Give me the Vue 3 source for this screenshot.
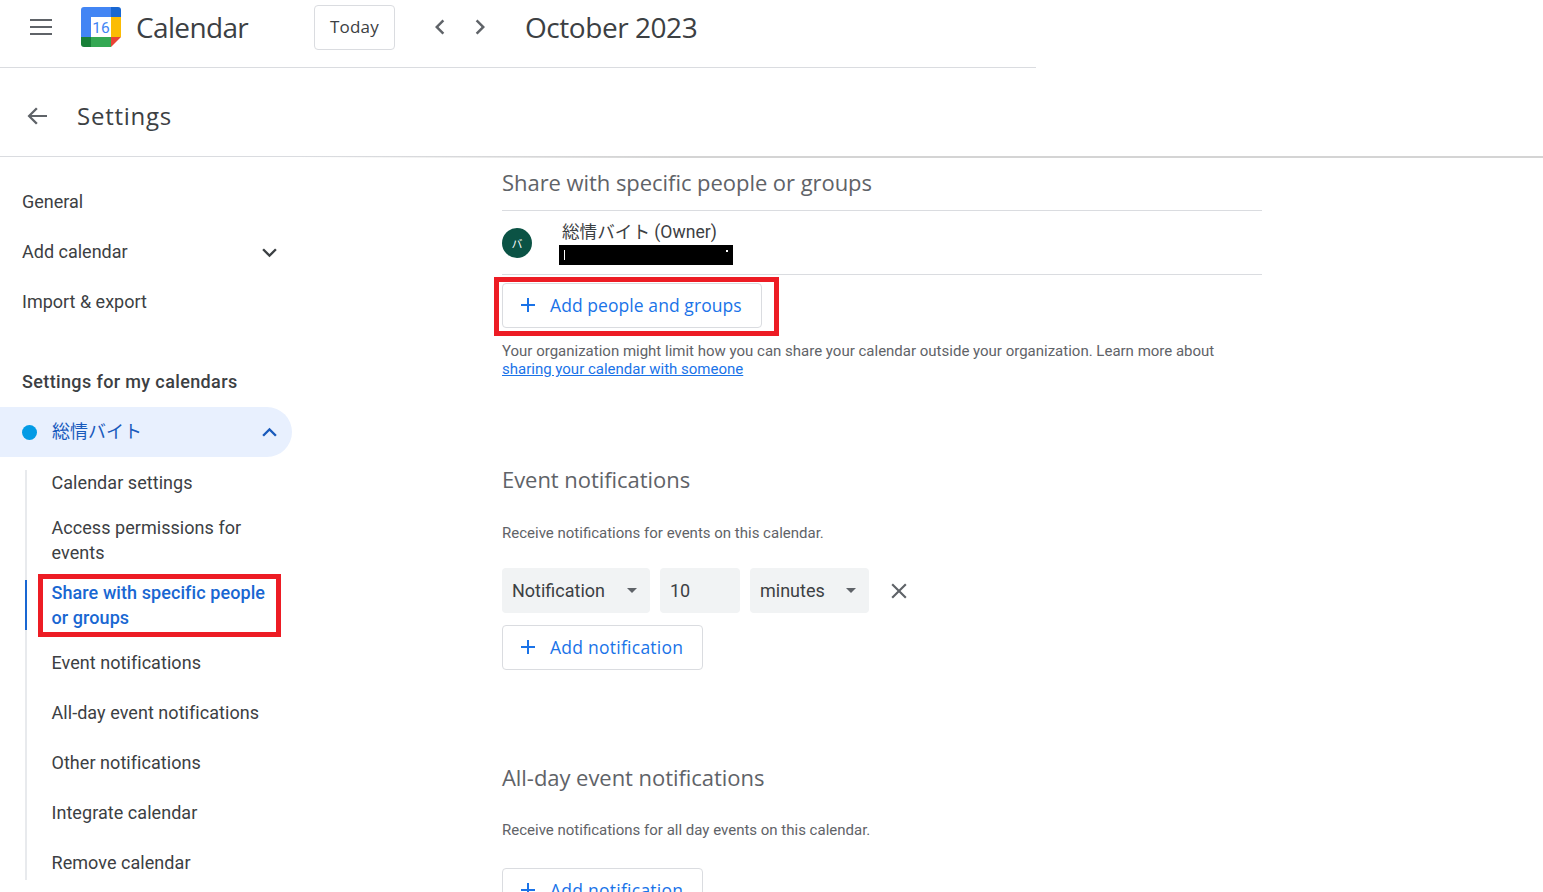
<script setup>
const topItems = [
  { label: 'General' },
  { label: 'Add calendar', chevron: true },
  { label: 'Import & export' }
]
const subItems = [
  { label: 'Calendar settings' },
  { label: 'Access permissions for events', tall: true },
  { label: 'Share with specific people or groups', tall: true, active: true },
  { label: 'Event notifications' },
  { label: 'All-day event notifications' },
  { label: 'Other notifications' },
  { label: 'Integrate calendar' },
  { label: 'Remove calendar' }
]
</script>

<template>
  <div class="page">
    <header class="topbar">
      <svg class="menu" width="24" height="24" viewBox="0 0 24 24"><path d="M1 4h22v2H1zM1 11h22v2H1zM1 18h22v2H1z" fill="#5f6368"/></svg>
      <svg class="logo" width="40" height="40" viewBox="0 0 40 40">
        <path d="M3 0h27v10H10v20H0V3a3 3 0 0 1 3-3z" fill="#4285f4"/>
        <path d="M30 0h7a3 3 0 0 1 3 3v7H30z" fill="#1967d2"/>
        <rect x="30" y="10" width="10" height="20" fill="#fbbc04"/>
        <rect x="10" y="30" width="20" height="10" fill="#34a853"/>
        <path d="M0 30h10v10H3a3 3 0 0 1-3-3z" fill="#188038"/>
        <path d="M30 30h10L30 40z" fill="#ea4335"/>
        <rect x="10" y="10" width="20" height="20" fill="#fff"/>
        <text x="20" y="26" text-anchor="middle" class="logo-num">16</text>
      </svg>
      <span class="brand">Calendar</span>
      <button class="today">Today</button>
      <svg class="nav-prev" width="30" height="30" viewBox="0 0 24 24"><path d="M15.400 7.400 14 6l-6 6 6 6 1.400-1.400L10.800 12z" fill="#5f6368"/></svg>
      <svg class="nav-next" width="30" height="30" viewBox="0 0 24 24"><path d="M8.600 7.400 10 6l6 6-6 6-1.400-1.400L13.200 12z" fill="#5f6368"/></svg>
      <span class="month">October 2023</span>
    </header>

    <div class="settings-bar">
      <svg class="back" width="24" height="24" viewBox="0 0 24 24"><path d="M22 11H6.600l6.100-6.100L11 3.500 2.500 12l8.500 8.500 1.700-1.400L6.600 13H22z" fill="#5f6368"/></svg>
      <h1>Settings</h1>
    </div>

    <div class="body">
      <nav class="sidebar">
        <div v-for="item in topItems" :key="item.label" class="top-item">
          <span class="top-label">{{ item.label }}</span>
          <svg v-if="item.chevron" width="29" height="29" viewBox="0 0 24 24"><path d="M7.400 8.600 12 13.200l4.600-4.600L18 10l-6 6-6-6z" fill="#3c4043"/></svg>
        </div>
        <div class="group-title">Settings for my calendars</div>
        <div class="calendar-item">
          <span class="dot"></span>
          <span class="cal-name">総情バイト</span>
          <svg width="29" height="29" viewBox="0 0 24 24"><path d="M7.400 15.400 12 10.800l4.600 4.600L18 14l-6-6-6 6z" fill="#185abc"/></svg>
        </div>
        <div class="sub-list">
          <div
            v-for="item in subItems"
            :key="item.label"
            class="sub-item"
            :class="{ tall: item.tall, active: item.active }"
          >{{ item.label }}</div>
        </div>
      </nav>

      <main class="content">
        <section class="share">
          <h2>Share with specific people or groups</h2>
          <div class="owner-row">
            <span class="avatar">バ</span>
            <div class="owner-text">
              <div class="owner-name">総情バイト (Owner)</div>
              <div class="redacted"><i class="mark-a"></i><i class="mark-b"></i></div>
            </div>
          </div>
          <button class="add-btn people">
            <svg width="24" height="24" viewBox="0 0 24 24"><path d="M19 13h-6v6h-2v-6H5v-2h6V5h2v6h6z" fill="#1a73e8"/></svg>
            <span class="btn-label">Add people and groups</span>
          </button>
          <p class="helper">Your organization might limit how you can share your calendar outside your organization. Learn more about <a href="#">sharing your calendar with someone</a></p>
        </section>

        <section class="events">
          <h2>Event notifications</h2>
          <p class="desc">Receive notifications for events on this calendar.</p>
          <div class="notify-row">
            <div class="field f-type">Notification<span class="caret"></span></div>
            <div class="field f-num">10</div>
            <div class="field f-unit">minutes<span class="caret"></span></div>
            <svg class="close" width="26" height="26" viewBox="0 0 24 24"><path d="M19 6.400 17.600 5 12 10.600 6.400 5 5 6.400 10.600 12 5 17.600 6.400 19l5.600-5.600 5.600 5.600 1.400-1.400L13.400 12z" fill="#5f6368"/></svg>
          </div>
          <button class="add-btn notif">
            <svg width="24" height="24" viewBox="0 0 24 24"><path d="M19 13h-6v6h-2v-6H5v-2h6V5h2v6h6z" fill="#1a73e8"/></svg>
            <span class="btn-label">Add notification</span>
          </button>
        </section>

        <section class="allday">
          <h2>All-day event notifications</h2>
          <p class="desc">Receive notifications for all day events on this calendar.</p>
          <button class="add-btn notif">
            <svg width="24" height="24" viewBox="0 0 24 24"><path d="M19 13h-6v6h-2v-6H5v-2h6V5h2v6h6z" fill="#1a73e8"/></svg>
            <span class="btn-label">Add notification</span>
          </button>
        </section>
      </main>
    </div>
  </div>
</template>

<style scoped>
.page {
  width: 1543px;
  height: 892px;
  overflow: hidden;
  background: #fff;
  font-family: Roboto, "Noto Sans CJK JP", sans-serif;
  color: #3c4043;
}
button { font-family: inherit; background: #fff; cursor: pointer; }

.topbar {
  width: 1036px;
  height: 68px;
  box-sizing: border-box;
  border-bottom: 1px solid #dadce0;
  display: flex;
  align-items: center;
  padding-bottom: 18px;
  padding-top: 5px;
}
.menu { margin-left: 29px; }
.logo { margin-left: 28px; flex: none; }
.logo-num { font: 400 15.5px Roboto, sans-serif; fill: #4285f4; }
.brand {
  margin-left: 15px;
  width: 178px;
  font: 400 28px/36px "Open Sans", sans-serif;
  letter-spacing: -0.65px;
  color: #3c4043;
}
.today {
  width: 81px;
  height: 45px;
  border: 1px solid #dadce0;
  border-radius: 4px;
  padding: 0 0 2px;
  font: 500 17px "Open Sans", sans-serif;
  letter-spacing: 0.2px;
  color: #3c4043;
  flex: none;
  align-self: flex-start;
}
.nav-prev { margin-left: 30px; }
.nav-next { margin-left: 10px; }
.month {
  margin-left: 30px;
  font: 400 28px/36px "Open Sans", sans-serif;
  letter-spacing: -0.45px;
  color: #3c4043;
}

.settings-bar {
  position: relative;
  height: 89px;
  box-sizing: border-box;
  border-bottom: 1px solid #dadce0;
  padding-top: 8px;
  display: flex;
  align-items: center;
}
.settings-bar::after {
  content: "";
  position: absolute;
  left: 300px;
  right: 0;
  top: 88px;
  height: 2px;
  background: linear-gradient(90deg, rgba(210, 210, 210, 0), #d4d4d4 30%);
}
.back { margin-left: 25px; }
h1 {
  margin: 0 0 0 28px;
  font: 400 24px/32px "Open Sans", sans-serif;
  letter-spacing: 0.75px;
  color: #3c4043;
}

.body { display: flex; height: 735px; overflow: hidden; }

.sidebar { width: 292px; flex: none; padding-top: 20px; font-size: 18px; }
.top-item {
  height: 50px;
  display: flex;
  align-items: center;
  justify-content: space-between;
  padding: 0 8px 0 22px;
  line-height: 25px;
}
.top-label { margin-bottom: 2px; }
.group-title {
  margin-top: 30px;
  height: 50px;
  box-sizing: border-box;
  padding: 0 0 2px 22px;
  display: flex;
  align-items: center;
  font-weight: 500;
  letter-spacing: 0.37px;
}
.calendar-item {
  height: 50px;
  background: #e8f0fe;
  border-radius: 0 25px 25px 0;
  display: flex;
  align-items: center;
  padding: 0 8px 0 22px;
  color: #185abc;
}
.dot { width: 15px; height: 15px; border-radius: 50%; background: #039be5; flex: none; }
.cal-name { margin: 0 0 4px 15px; flex: 1; }

.sub-list { position: relative; padding-top: 1px; }
.sub-list::before {
  content: "";
  position: absolute;
  left: 25px;
  top: 13px;
  height: 410px;
  width: 2px;
  background: #e8eaed;
}
.sub-item {
  position: relative;
  box-sizing: border-box;
  height: 50px;
  padding: 11.5px 20px 13.5px 51.5px;
  line-height: 25px;
  letter-spacing: 0.05px;
}
.sub-item.tall { height: 65px; padding-top: 6.5px; padding-bottom: 8.5px; }
.sub-item.active { color: #1967d2; font-weight: 500; letter-spacing: 0.08px; }
.sub-item.active::before {
  content: "";
  position: absolute;
  left: 25px;
  top: 7px;
  width: 2px;
  height: 50px;
  background: #1967d2;
}
.sub-item.active::after {
  content: "";
  position: absolute;
  left: 38px;
  top: 1px;
  width: 243px;
  height: 63px;
  box-sizing: border-box;
  border: 5px solid #ed1c24;
}

.content { margin-left: 210px; width: 760px; flex: none; }
h2 {
  margin: 0;
  font: 400 22px/30px "Open Sans", sans-serif;
  letter-spacing: -0.05px;
  color: #5f6368;
}
.share { padding-top: 10px; }
.owner-row {
  margin-top: 13px;
  height: 65px;
  box-sizing: border-box;
  border-top: 1px solid #dadce0;
  border-bottom: 1px solid #dadce0;
  display: flex;
  align-items: center;
}
.avatar {
  width: 30px;
  height: 30px;
  border-radius: 50%;
  background: #0b5345;
  color: #fff;
  font-size: 11px;
  display: flex;
  align-items: center;
  justify-content: center;
  flex: none;
}
.owner-text { margin-left: 27px; align-self: flex-start; }
.owner-name { margin: 9px 0 0 3px; font-size: 17.6px; line-height: 24px; }
.redacted {
  position: relative;
  width: 174px;
  height: 20px;
  margin-top: 1px;
  background: #000;
}
.redacted i { position: absolute; background: #fff; }
.mark-a { left: 5px; top: 5px; width: 1px; height: 10px; }
.mark-b { left: 167px; top: 5px; width: 2px; height: 2px; }

.add-btn {
  display: flex;
  align-items: center;
  height: 45px;
  box-sizing: border-box;
  border: 1px solid #dadce0;
  border-radius: 4px;
  padding: 0 0 2px 13px;
  gap: 10px;
  color: #1a73e8;
  font: 500 17.5px "Open Sans", sans-serif;
}
.people { position: relative; width: 260px; margin-top: 8px; letter-spacing: 0.07px; }
.people::after {
  content: "";
  position: absolute;
  left: -9px;
  top: -7px;
  width: 285px;
  height: 59px;
  box-sizing: border-box;
  border: 5px solid #ed1c24;
}
.notif { width: 201px; letter-spacing: 0.25px; }

.helper {
  margin: 14px 0 0;
  font-size: 15px;
  line-height: 18px;
  color: #5f6368;
}
.helper a { color: #1a73e8; }

.events { padding-top: 86px; }
.desc { margin: 0; font-size: 15px; line-height: 18px; color: #5f6368; }
.events .desc { margin-top: 30px; }
.notify-row { margin-top: 26px; display: flex; align-items: center; gap: 10px; }
.field {
  height: 45px;
  box-sizing: border-box;
  border-radius: 4px;
  background: #f1f3f4;
  display: flex;
  align-items: center;
  justify-content: space-between;
  padding: 0 13px 0 10px;
  font-size: 18px;
  color: #3c4043;
}
.f-type { width: 148px; }
.f-num { width: 80px; }
.f-unit { width: 119px; }
.caret { width: 0; height: 0; border-left: 5px solid transparent; border-right: 5px solid transparent; border-top: 5px solid #5f6368; }
.close { margin-left: 7px; }
.notif { margin-top: 12px; }
.allday { padding-top: 92px; }
.allday .desc { margin-top: 29px; }
.allday .notif { margin-top: 29px; }
</style>
